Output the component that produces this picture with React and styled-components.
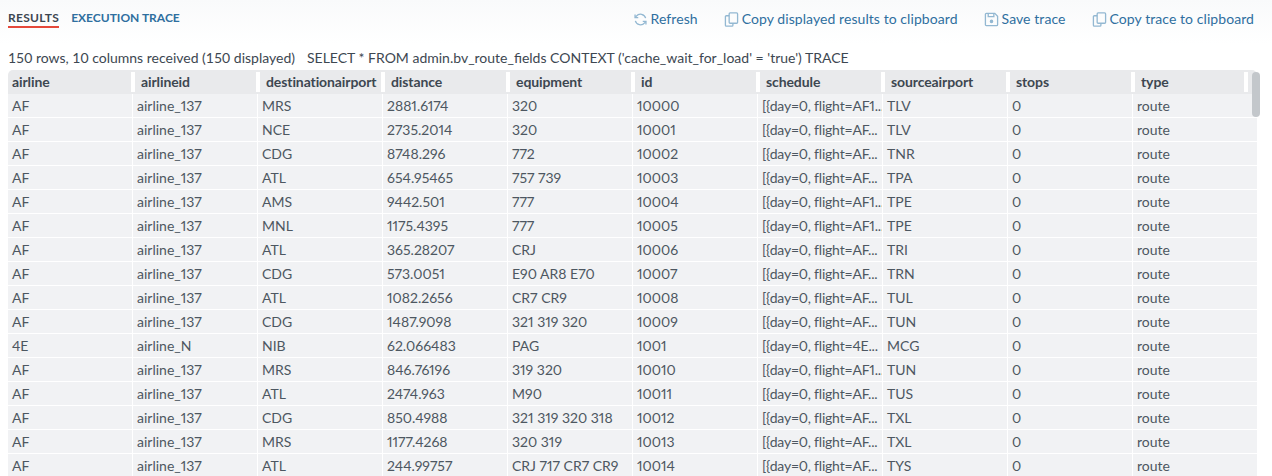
import React from 'react'
import styled, { createGlobalStyle } from 'styled-components'

const columns = ['airline', 'airlineid', 'destinationairport', 'distance', 'equipment', 'id', 'schedule', 'sourceairport', 'stops', 'type']

const rows = [
  ['AF', 'airline_137', 'MRS', '2881.6174', '320', '10000', '[{day=0, flight=AF1...', 'TLV'],
  ['AF', 'airline_137', 'NCE', '2735.2014', '320', '10001', '[{day=0, flight=AF...', 'TLV'],
  ['AF', 'airline_137', 'CDG', '8748.296', '772', '10002', '[{day=0, flight=AF...', 'TNR'],
  ['AF', 'airline_137', 'ATL', '654.95465', '757 739', '10003', '[{day=0, flight=AF...', 'TPA'],
  ['AF', 'airline_137', 'AMS', '9442.501', '777', '10004', '[{day=0, flight=AF1...', 'TPE'],
  ['AF', 'airline_137', 'MNL', '1175.4395', '777', '10005', '[{day=0, flight=AF1...', 'TPE'],
  ['AF', 'airline_137', 'ATL', '365.28207', 'CRJ', '10006', '[{day=0, flight=AF...', 'TRI'],
  ['AF', 'airline_137', 'CDG', '573.0051', 'E90 AR8 E70', '10007', '[{day=0, flight=AF...', 'TRN'],
  ['AF', 'airline_137', 'ATL', '1082.2656', 'CR7 CR9', '10008', '[{day=0, flight=AF...', 'TUL'],
  ['AF', 'airline_137', 'CDG', '1487.9098', '321 319 320', '10009', '[{day=0, flight=AF...', 'TUN'],
  ['4E', 'airline_N', 'NIB', '62.066483', 'PAG', '1001', '[{day=0, flight=4E...', 'MCG'],
  ['AF', 'airline_137', 'MRS', '846.76196', '319 320', '10010', '[{day=0, flight=AF1...', 'TUN'],
  ['AF', 'airline_137', 'ATL', '2474.963', 'M90', '10011', '[{day=0, flight=AF...', 'TUS'],
  ['AF', 'airline_137', 'CDG', '850.4988', '321 319 320 318', '10012', '[{day=0, flight=AF...', 'TXL'],
  ['AF', 'airline_137', 'MRS', '1177.4268', '320 319', '10013', '[{day=0, flight=AF...', 'TXL'],
  ['AF', 'airline_137', 'ATL', '244.99757', 'CRJ 717 CR7 CR9', '10014', '[{day=0, flight=AF...', 'TYS'],
]

const GlobalStyle = createGlobalStyle`
  html, body {
    margin: 0;
    height: 476px;
    overflow: hidden;
    background: #fff;
    font-family: 'Lato', 'Open Sans', sans-serif;
    font-variant-numeric: proportional-nums;
  }
`

const Page = styled.div`
  width: 1272px;
  height: 476px;
  overflow: hidden;
  background: linear-gradient(#f9fafb 0, #fff 44px);
`

const TopBar = styled.div`
  display: flex;
  justify-content: space-between;
  align-items: flex-start;
  height: 48px;
  padding: 11px 18px 0 8px;
  box-sizing: border-box;
`

const Tabs = styled.div`
  display: flex;
  gap: 12px;
`

const Tab = styled.div`
  font-size: 12px;
  font-weight: 700;
  line-height: 14px;
  padding-bottom: 1px;
  letter-spacing: ${(p) => (p.$active ? '0.3px' : '0')};
  color: ${(p) => (p.$active ? '#3d4751' : '#2f6f9f')};
  border-bottom: 2px solid ${(p) => (p.$active ? '#e5483a' : 'transparent')};
`

const Actions = styled.div`
  display: flex;
  gap: 26px;
`

const Action = styled.div`
  display: flex;
  align-items: center;
  gap: 3px;
  font-size: 14px;
  line-height: 16px;
  letter-spacing: 0.07px;
  color: #2f6f9f;

  svg {
    width: 15px;
    height: 15px;
    fill: none;
    stroke: #93b8d2;
    stroke-width: 1.4;
  }
`

const Summary = styled.div`
  display: flex;
  gap: 12px;
  height: 22px;
  padding-left: 8px;
  font-size: 14px;
  line-height: 20px;
  font-variant-numeric: tabular-nums;
  color: #3d4751;
`

const TableWrap = styled.div`
  position: relative;
  width: 1249px;
  margin-left: 8px;
`

const Header = styled.div`
  display: grid;
  grid-template-columns: 127px repeat(8, 125px) 113px;
  height: 24px;
  background: #e9eaec;
  border-radius: 5px 5px 0 0;
`

const HeadCell = styled.div`
  padding-left: ${(p) => (p.$first ? '4px' : '6px')};
  margin-top: 2px;
  font-size: 14px;
  font-weight: 700;
  line-height: 20px;
  height: 20px;
  box-sizing: border-box;
  letter-spacing: -0.1px;
  color: #3d4751;
  border-right: 4px solid #fff;
  white-space: nowrap;
`

const Row = styled.div`
  display: grid;
  grid-template-columns: repeat(9, 125px) 124px;
  height: 24px;
  box-sizing: border-box;
  border-bottom: 1px solid #fff;
  background: #f1f2f4;
`

const Cell = styled.div`
  padding-left: 4px;
  font-size: 14px;
  line-height: 24px;
  letter-spacing: ${(p) => (p.$tight ? '-0.2px' : '0')};
  color: #4d5761;
  border-right: 1px solid #fff;
  white-space: nowrap;
  overflow: hidden;

  &:last-child {
    border-right: 0;
  }
`

const ScrollThumb = styled.div`
  position: absolute;
  top: 2px;
  left: 1244px;
  width: 8px;
  height: 45px;
  border-radius: 4px;
  background: #c3c7cb;
`

const RefreshIcon = () => (
  <svg viewBox="0 0 16 16">
    <path d="M13.5 6.5A5.7 5.7 0 0 0 3.6 4.4L2.3 6" />
    <path d="M2.2 2.6V6h3.4" />
    <path d="M2.5 9.5a5.7 5.7 0 0 0 9.9 2.1l1.3-1.6" />
    <path d="M13.8 13.4V10h-3.4" />
  </svg>
)

const CopyIcon = () => (
  <svg viewBox="0 0 16 16">
    <rect x="5.5" y="1" width="9" height="11" rx="1" />
    <path d="M5.5 4H2.5a1 1 0 0 0-1 1v9a1 1 0 0 0 1 1h6a1 1 0 0 0 1-1v-2" />
  </svg>
)

const SaveIcon = () => (
  <svg viewBox="0 0 16 16">
    <path d="M2.5 1.5h9l3 3v9a1 1 0 0 1-1 1h-11a1 1 0 0 1-1-1v-11a1 1 0 0 1 1-1z" />
    <path d="M4.5 1.5v3.5h6V1.5" />
    <circle cx="8" cy="10" r="1.2" fill="#93b8d2" />
  </svg>
)

const App = () => {
  return (
    <Page>
      <GlobalStyle />
      <TopBar>
        <Tabs>
          <Tab $active>RESULTS</Tab>
          <Tab>EXECUTION TRACE</Tab>
        </Tabs>
        <Actions>
          <Action><RefreshIcon />Refresh</Action>
          <Action><CopyIcon />Copy displayed results to clipboard</Action>
          <Action><SaveIcon />Save trace</Action>
          <Action><CopyIcon />Copy trace to clipboard</Action>
        </Actions>
      </TopBar>
      <Summary>
        <span>150 rows, 10 columns received (150 displayed)</span>
        <span>SELECT * FROM admin.bv_route_fields CONTEXT ('cache_wait_for_load' = 'true') TRACE</span>
      </Summary>
      <TableWrap>
        <Header>
          {columns.map((c, i) => <HeadCell key={c} $first={i === 0}>{c}</HeadCell>)}
        </Header>
        {rows.map((r) => (
          <Row key={r[5]}>
            {r.map((v, i) => <Cell key={i} $tight={i === 6}>{v}</Cell>)}
            <Cell>0</Cell>
            <Cell>route</Cell>
          </Row>
        ))}
        <ScrollThumb />
      </TableWrap>
    </Page>
  )
}

export default App
